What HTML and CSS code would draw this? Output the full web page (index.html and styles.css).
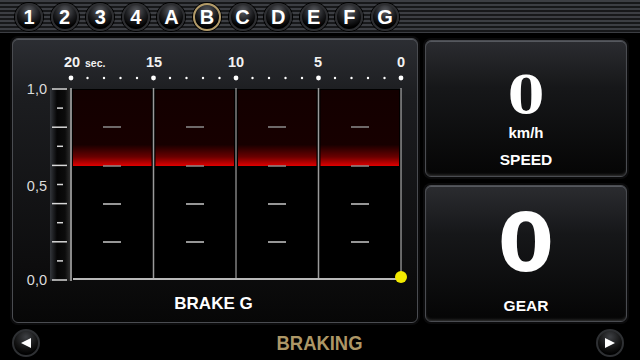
FILE: index.html
```html
<!DOCTYPE html>
<html lang="en">
<head>
  <meta charset="UTF-8" />
  <title>Braking</title>
  <link rel="stylesheet" href="styles.css">
</head>
<body>
  <div class="tabs">
    <span class="tab">1</span>
    <span class="tab">2</span>
    <span class="tab">3</span>
    <span class="tab">4</span>
    <span class="tab">A</span>
    <span class="tab active">B</span>
    <span class="tab">C</span>
    <span class="tab">D</span>
    <span class="tab">E</span>
    <span class="tab">F</span>
    <span class="tab">G</span>
  </div>

  <div class="main">
    <div class="panel chart-panel">
      <svg class="chart" viewBox="12 38 406 250" width="406" height="250">
        <defs>
          <linearGradient id="redfill" x1="0" y1="0" x2="0" y2="1">
            <stop offset="0" stop-color="#130000"/>
            <stop offset="0.72" stop-color="#170000"/>
            <stop offset="0.88" stop-color="#6a0000"/>
            <stop offset="1" stop-color="#e00000"/>
          </linearGradient>
          <linearGradient id="strip" x1="0" y1="0" x2="1" y2="0">
            <stop offset="0" stop-color="#33363b"/>
            <stop offset="0.35" stop-color="#060606"/>
            <stop offset="0.75" stop-color="#0c0c0c"/>
            <stop offset="1" stop-color="#2c2c2c"/>
          </linearGradient>
        </defs>

        <!-- time axis -->
        <g class="t-labels">
          <text x="72" y="67" text-anchor="middle">20</text>
          <text x="85" y="67" class="sec">sec.</text>
          <text x="154" y="67" text-anchor="middle">15</text>
          <text x="236" y="67" text-anchor="middle">10</text>
          <text x="318" y="67" text-anchor="middle">5</text>
          <text x="401" y="67" text-anchor="middle">0</text>
        </g>
        <g fill="#fff" id="dots"></g>

        <!-- plot -->
        <rect x="71" y="89" width="330" height="191" fill="#000"/>
        <rect x="50" y="88" width="20" height="193" fill="url(#strip)"/>

        <rect x="73" y="90" width="78.5" height="76" fill="url(#redfill)"/>
        <rect x="155.5" y="90" width="78.5" height="76" fill="url(#redfill)"/>
        <rect x="238" y="90" width="78.5" height="76" fill="url(#redfill)"/>
        <rect x="320.5" y="90" width="78.5" height="76" fill="url(#redfill)"/>

        <g stroke="#d8d8d8" stroke-width="1.5" id="ticks"></g>
        <g class="y-labels">
          <text x="47" y="94" text-anchor="end">1,0</text>
          <text x="47" y="191" text-anchor="end">0,5</text>
          <text x="47" y="285" text-anchor="end">0,0</text>
        </g>

        <g stroke-width="1.5" id="dashes"></g>

        <line x1="71" y1="88" x2="71" y2="281" stroke="#8a8a8a" stroke-width="2"/>
        <line x1="153.5" y1="88" x2="153.5" y2="279" stroke="#9a9a9a" stroke-width="1.5"/>
        <line x1="236" y1="88" x2="236" y2="279" stroke="#bdbdbd" stroke-width="1"/>
        <line x1="318.5" y1="88" x2="318.5" y2="279" stroke="#9a9a9a" stroke-width="1.5"/>
        <line x1="401" y1="88" x2="401" y2="276" stroke="#c8c8c8" stroke-width="1"/>
        <line x1="73" y1="279" x2="396" y2="279" stroke="#b8b8b8" stroke-width="2"/>
        <circle cx="401" cy="277" r="6" fill="#f2ea00"/>
      </svg>
      <div class="chart-title">BRAKE G</div>
    </div>

    <div class="side">
      <div class="panel value-panel">
        <div class="big serif">0</div>
        <div class="unit">km/h</div>
        <div class="label">SPEED</div>
      </div>
      <div class="panel value-panel">
        <div class="big sans">0</div>
        <div class="label gear">GEAR</div>
      </div>
    </div>
  </div>

  <div class="footer">
    <span class="nav">
      <svg width="12" height="12" viewBox="0 0 12 12"><polygon points="11,1 11,11 1,6" fill="#fff"/></svg>
    </span>
    <span class="page-title">BRAKING</span>
    <span class="nav">
      <svg width="12" height="12" viewBox="0 0 12 12"><polygon points="1,1 1,11 11,6" fill="#fff"/></svg>
    </span>
  </div>

  <script>
    const NS = 'http://www.w3.org/2000/svg';

    function add(parent, tag, attrs) {
      const el = document.createElementNS(NS, tag);
      for (const k in attrs) el.setAttribute(k, attrs[k]);
      parent.appendChild(el);
    }

    const dots = document.getElementById('dots');
    for (let i = 0; i <= 20; i++) {
      add(dots, 'circle', { cx: 71 + i * 16.5, cy: 78, r: i % 5 === 0 ? 2.4 : 1.2 });
    }

    const ticks = document.getElementById('ticks');
    for (let i = 0; i <= 10; i++) {
      const y = 89 + i * 19.1;
      if (i % 2 === 0) add(ticks, 'line', { x1: 52, x2: 67, y1: y, y2: y });
      else add(ticks, 'line', { x1: 57, x2: 63, y1: y, y2: y });
    }

    const dashes = document.getElementById('dashes');
    [112, 195, 277, 360].forEach(cx => {
      [[127, '#8c8c8c'], [166, '#8c8c8c'], [204, '#c8c8c8'], [242, '#c8c8c8']].forEach(([y, c]) => {
        add(dashes, 'line', { x1: cx - 9, x2: cx + 9, y1: y, y2: y, stroke: c });
      });
    });
  </script>
</body>
</html>
```

FILE: styles.css
```css
body {
  margin: 0;
  width: 640px;
  height: 360px;
  overflow: hidden;
  background: #000;
  font-family: "Liberation Sans", Arial, sans-serif;
  color: #fff;
}

.tabs {
  height: 33px;
  display: flex;
  align-items: center;
  gap: 7.6px;
  padding-left: 15px;
  box-sizing: border-box;
  background: repeating-linear-gradient(180deg, #3c3e43 0px, #3c3e43 2px, #17181a 2px, #17181a 4px);
}

.tab {
  width: 28px;
  height: 28px;
  border-radius: 50%;
  box-sizing: border-box;
  border: 2px solid #2d2e31;
  background: radial-gradient(circle at 50% 25%, #5a5c61 0%, #1e1f22 45%, #000 75%);
  box-shadow: 0 0 0 1px #000;
  display: flex;
  justify-content: center;
  align-items: center;
  font-weight: bold;
  font-size: 20px;
  line-height: 1;
}

.tab.active {
  border-color: #b39b68;
}

.main {
  display: flex;
  gap: 7px;
  padding: 5px 13px 0 12px;
}

.panel {
  position: relative;
  box-sizing: border-box;
  border: 1px solid #4a4c51;
  border-radius: 6px;
  box-shadow: 0 0 0 2px #0b0b0c, inset 0 1px 0 #55585e;
}

.chart-panel {
  width: 406px;
  height: 285px;
  background: linear-gradient(180deg, #2c2e33 0%, #1c1d20 20%, #0d0d0e 80%, #070707 100%);
  display: flex;
  flex-direction: column;
}

.chart {
  display: block;
  margin: -1px 0 0 -1px;
}

.t-labels text {
  font-weight: bold;
  font-size: 14.5px;
  fill: #f2f2f2;
}

.t-labels .sec {
  font-size: 10.5px;
}

.y-labels text {
  font-size: 14.5px;
  fill: #dcdcdc;
}

.chart-title {
  margin-top: 6px;
  text-align: center;
  font-weight: bold;
  font-size: 17px;
  padding-right: 3px;
}

.side {
  display: flex;
  flex-direction: column;
  gap: 8px;
  padding-top: 2px;
}

.value-panel {
  width: 202px;
  height: 137px;
  background: linear-gradient(180deg, #2b2c30 0%, #161719 35%, #050505 100%);
  box-shadow: 0 0 0 2px #0b0b0c, inset 0 1px 0 #55585e, inset 0 -2px 3px -1px #3a3a3a;
  display: flex;
  flex-direction: column;
  align-items: center;
}

.big {
  font-weight: bold;
  line-height: 1;
}

.big.serif {
  font-family: "DejaVu Serif", "Liberation Serif", serif;
  font-size: 52px;
  margin-top: 28px;
  height: 52px;
}

.big.sans {
  font-family: "DejaVu Sans", "Liberation Sans", sans-serif;
  font-size: 81px;
  margin-top: 17px;
  height: 81px;
}

.unit {
  font-weight: bold;
  font-size: 15px;
  line-height: 15px;
  margin-top: 4px;
}

.label {
  font-weight: bold;
  font-size: 15.5px;
  margin-top: 11px;
}

.label.gear {
  margin-top: 13px;
}

.footer {
  display: flex;
  justify-content: space-between;
  align-items: center;
  padding: 6px 16px 0 12px;
}

.nav {
  width: 28px;
  height: 28px;
  border-radius: 50%;
  box-sizing: border-box;
  border: 2px solid #2e3033;
  background: radial-gradient(circle at 50% 25%, #3e4044 0%, #111 55%, #000 80%);
  display: flex;
  justify-content: center;
  align-items: center;
}

.page-title {
  color: #ad9766;
  font-weight: bold;
  font-size: 20px;
  transform: scaleX(0.92);
  padding-left: 4px;
}
```
